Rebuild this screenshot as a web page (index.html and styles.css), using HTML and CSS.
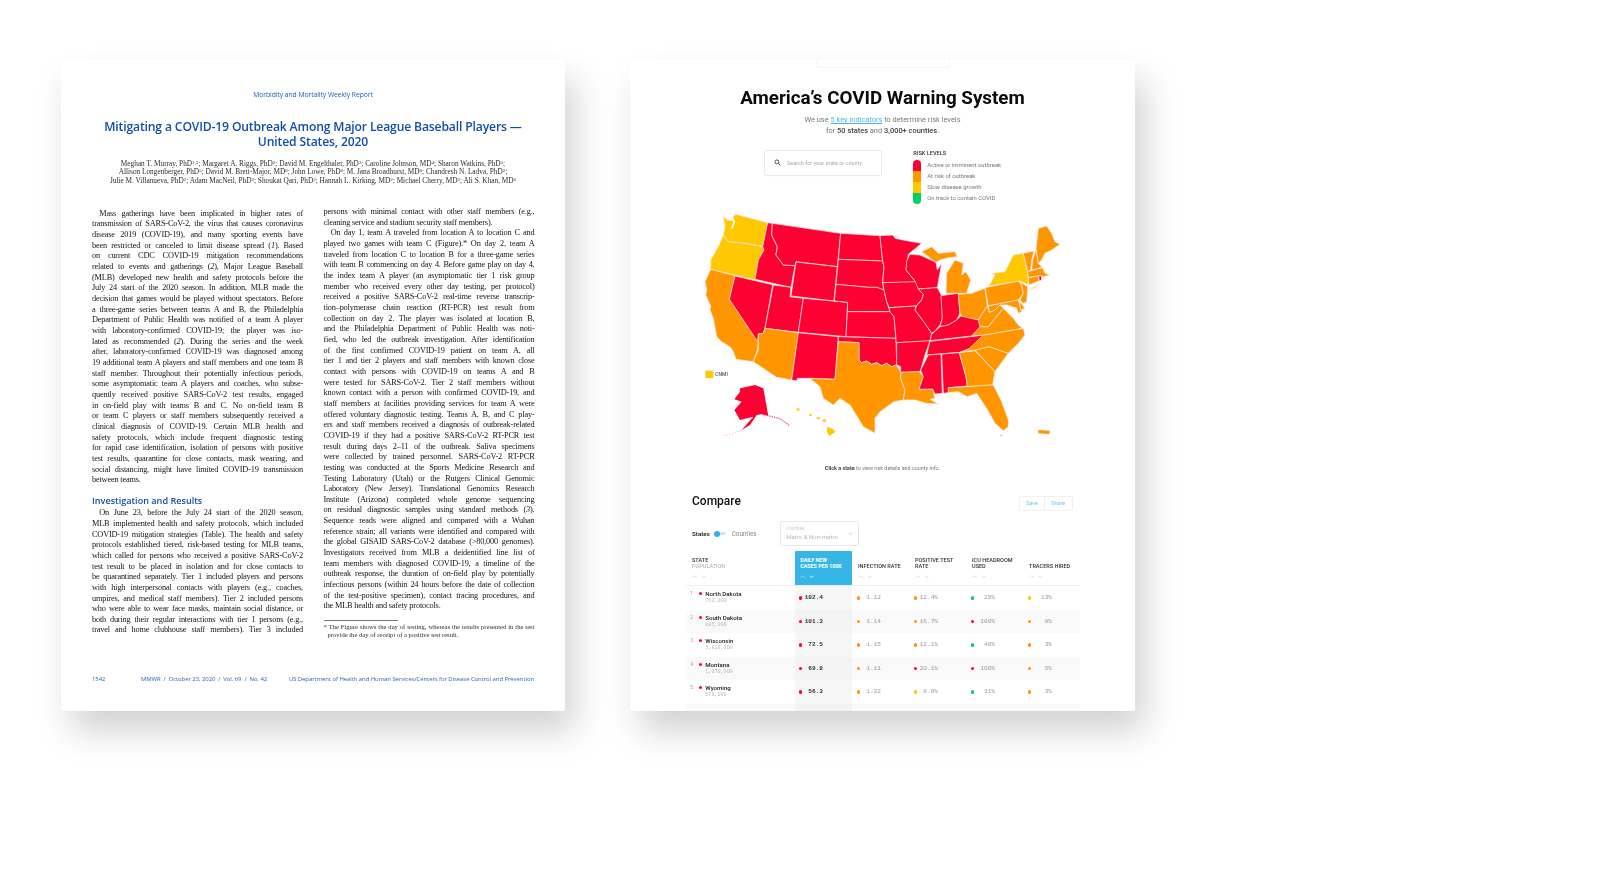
FILE: index.html
```html
<!DOCTYPE html>
<html lang="en">
<head>
<meta charset="utf-8">
<title>MMWR report and COVID Warning System</title>
<link rel="stylesheet" href="styles.css">
</head>
<body>
<main class="stage">
  <article class="card paper">
    <header class="paper-head">
      <div class="journal">Morbidity and Mortality Weekly Report</div>
      <h1 class="paper-title">Mitigating a COVID-19 Outbreak Among Major League Baseball Players —<br>United States, 2020</h1>
      <p class="authors">Meghan T. Murray, PhD<sup>1,5</sup>; Margaret A. Riggs, PhD<sup>2</sup>; David M. Engelthaler, PhD<sup>3</sup>; Caroline Johnson, MD<sup>4</sup>; Sharon Watkins, PhD<sup>5</sup>;<br>Allison Longenberger, PhD<sup>5</sup>; David M. Brett-Major, MD<sup>6</sup>; John Lowe, PhD<sup>6</sup>; M. Jana Broadhurst, MD<sup>6</sup>; Chandresh N. Ladva, PhD<sup>2</sup>;<br>Julie M. Villanueva, PhD<sup>2</sup>; Adam MacNeil, PhD<sup>2</sup>; Shoukat Qari, PhD<sup>2</sup>; Hannah L. Kirking, MD<sup>2</sup>; Michael Cherry, MD<sup>2</sup>; Ali S. Khan, MD<sup>6</sup></p>
    </header>
    <div class="columns">
      <div class="col col-left">
        <p class="just indent">Mass gatherings have been implicated in higher rates of<br>transmission of SARS-CoV-2, the virus that causes coronavirus<br>disease 2019 (COVID-19), and many sporting events have<br>been restricted or canceled to limit disease spread (<i>1</i>). Based<br>on current CDC COVID-19 mitigation recommendations<br>related to events and gatherings (<i>2</i>), Major League Baseball<br>(MLB) developed new health and safety protocols before the<br>July 24 start of the 2020 season. In addition, MLB made the<br>decision that games would be played without spectators. Before<br>a three-game series between teams A and B, the Philadelphia<br>Department of Public Health was notified of a team A player<br>with laboratory-confirmed COVID-19; the player was iso-<br>lated as recommended (<i>2</i>). During the series and the week<br>after, laboratory-confirmed COVID-19 was diagnosed among<br>19 additional team A players and staff members and one team B<br>staff member. Throughout their potentially infectious periods,<br>some asymptomatic team A players and coaches, who subse-<br>quently received positive SARS-CoV-2 test results, engaged<br>in on-field play with teams B and C. No on-field team B<br>or team C players or staff members subsequently received a<br>clinical diagnosis of COVID-19. Certain MLB health and<br>safety protocols, which include frequent diagnostic testing<br>for rapid case identification, isolation of persons with positive<br>test results, quarantine for close contacts, mask wearing, and<br>social distancing, might have limited COVID-19 transmission</p>
        <p class="tail">between teams.</p>
        <h2 class="section">Investigation and Results</h2>
        <p class="just indent">On June 23, before the July 24 start of the 2020 season,<br>MLB implemented health and safety protocols, which included<br>COVID-19 mitigation strategies (Table). The health and safety<br>protocols established tiered, risk-based testing for MLB teams,<br>which called for persons who received a positive SARS-CoV-2<br>test result to be placed in isolation and for close contacts to<br>be quarantined separately. Tier 1 included players and persons<br>with high interpersonal contacts with players (e.g., coaches,<br>umpires, and medical staff members). Tier 2 included persons<br>who were able to wear face masks, maintain social distance, or<br>both during their regular interactions with tier 1 persons (e.g.,<br>travel and home clubhouse staff members). Tier 3 included</p>
      </div>
      <div class="col">
        <p class="just">persons with minimal contact with other staff members (e.g.,</p>
        <p class="tail">cleaning service and stadium security staff members).</p>
        <p class="just indent">On day 1, team A traveled from location A to location C and<br>played two games with team C (Figure).* On day 2, team A<br>traveled from location C to location B for a three-game series<br>with team B commencing on day 4. Before game play on day 4,<br>the index team A player (an asymptomatic tier 1 risk group<br>member who received every other day testing, per protocol)<br>received a positive SARS-CoV-2 real-time reverse transcrip-<br>tion–polymerase chain reaction (RT-PCR) test result from<br>collection on day 2. The player was isolated at location B,<br>and the Philadelphia Department of Public Health was noti-<br>fied, who led the outbreak investigation. After identification<br>of the first confirmed COVID-19 patient on team A, all<br>tier 1 and tier 2 players and staff members with known close<br>contact with persons with COVID-19 on teams A and B<br>were tested for SARS-CoV-2. Tier 2 staff members without<br>known contact with a person with confirmed COVID-19, and<br>staff members at facilities providing services for team A were<br>offered voluntary diagnostic testing. Teams A, B, and C play-<br>ers and staff members received a diagnosis of outbreak-related<br>COVID-19 if they had a positive SARS-CoV-2 RT-PCR test<br>result during days 2–11 of the outbreak. Saliva specimens<br>were collected by trained personnel. SARS-CoV-2 RT-PCR<br>testing was conducted at the Sports Medicine Research and<br>Testing Laboratory (Utah) or the Rutgers Clinical Genomic<br>Laboratory (New Jersey). Translational Genomics Research<br>Institute (Arizona) completed whole genome sequencing<br>on residual diagnostic samples using standard methods (<i>3</i>).<br>Sequence reads were aligned and compared with a Wuhan<br>reference strain; all variants were identified and compared with<br>the global GISAID SARS-CoV-2 database (&gt;80,000 genomes).<br>Investigators received from MLB a deidentified line list of<br>team members with diagnosed COVID-19, a timeline of the<br>outbreak response, the duration of on-field play by potentially<br>infectious persons (within 24 hours before the date of collection<br>of the test-positive specimen), contact tracing procedures, and</p>
        <p class="tail">the MLB health and safety protocols.</p>
        <div class="foot-rule"></div>
        <p class="footnote"><span class="just-line">* The Figure shows the day of testing, whereas the results presented in the test</span><span class="foot-2">provide the day of receipt of a positive test result.</span></p>
      </div>
    </div>
    <footer class="paper-foot">
      <span class="page-no">1542</span>
      <span>MMWR &nbsp;/&nbsp; October 23, 2020 &nbsp;/&nbsp; Vol. 69 &nbsp;/&nbsp; No. 42</span>
      <span class="dept">US Department of Health and Human Services/Centers for Disease Control and Prevention</span>
    </footer>
  </article>

  <section class="card tool">
    <div class="tab"></div>
    <h1 class="tool-title">America’s COVID Warning System</h1>
    <p class="tool-sub">We use <a class="key-link">5 key indicators</a> to determine risk levels<br>for <b>50 states</b> and <b>3,000+ counties</b>.</p>
    <div class="finder">
      <div class="search">
        <svg class="search-icon" viewBox="0 0 12 12"><circle cx="5" cy="5" r="3.4"/><path d="M7.6 7.6 11 11"/></svg>
        <span>Search for your state or county</span>
      </div>
      <div class="legend">
        <div class="legend-title">RISK LEVELS</div>
        <div class="legend-body">
          <div class="legend-bar"><i class="seg-r"></i><i class="seg-o"></i><i class="seg-y"></i><i class="seg-g"></i></div>
          <ul class="legend-list">
            <li>Active or imminent outbreak</li>
            <li>At risk of outbreak</li>
            <li>Slow disease growth</li>
            <li>On track to contain COVID</li>
          </ul>
        </div>
      </div>
    </div>

    <svg class="map" viewBox="0 30 1200 700" aria-label="Map of US states by risk level">
      <g class="states">
        <path class="y" d="M100,50 L112,60 L128,62 L130,50 L138,43 L233,68 L218,140 L165,130 L115,125 L100,105 L105,80 Z"/>
        <path class="y" d="M100,105 L115,125 L165,130 L218,140 L222,150 L205,180 L195,240 L62,208 L62,180 L85,140 Z"/>
        <path class="o" d="M62,208 L135,227 L118,298 L205,425 L202,450 L190,485 L138,478 L130,455 L122,442 L95,425 L80,410 L70,355 L60,330 L62,318 L47,285 L50,270 L45,245 Z"/>
        <path class="r" d="M135,228 L248,254 L225,385 L220,400 L205,402 L203,425 L118,298 Z"/>
        <path class="r" d="M233,68 L247,70 L245,105 L262,140 L258,165 L280,195 L315,197 L303,262 L195,238 L205,180 L222,150 L218,140 Z"/>
        <path class="r" d="M247,70 L452,100 L442,200 L318,185 L315,197 L280,195 L258,165 L262,140 L245,105 Z"/>
        <path class="r" d="M318,186 L442,200 L432,303 L303,288 Z"/>
        <path class="r" d="M250,255 L303,262 L300,290 L340,295 L325,397 L225,385 Z"/>
        <path class="r" d="M340,295 L473,307 L468,410 L325,397 Z"/>
        <path class="o" d="M225,385 L325,398 L305,540 L260,532 L190,485 L205,450 L205,402 L220,400 Z"/>
        <path class="r" d="M325,398 L445,410 L435,538 L360,535 L322,535 L320,543 L305,540 Z"/>
        <path class="r" d="M452,100 L570,107 L578,183 L445,178 Z"/>
        <path class="r" d="M445,178 L578,183 L582,200 L578,248 L582,270 L560,262 L535,262 L438,253 Z"/>
        <path class="r" d="M438,253 L535,262 L560,262 L582,270 L590,305 L600,335 L472,335 L473,307 L433,303 Z"/>
        <path class="r" d="M472,335 L600,335 L612,350 L618,415 L468,410 Z"/>
        <path class="r" d="M445,410 L618,415 L620,495 L605,500 L590,490 L575,497 L560,488 L545,493 L530,483 L515,488 L507,480 L507,428 L445,425 Z"/>
        <path class="o" d="M445,425 L507,428 L507,480 L515,488 L530,483 L545,493 L560,488 L575,497 L590,490 L605,500 L620,495 L632,517 L632,535 L645,570 L640,600 L612,605 L570,635 L555,655 L555,700 L520,680 L480,615 L450,595 L430,615 L400,595 L390,560 L360,535 L435,538 Z"/>
        <path class="r" d="M570,107 L608,105 L615,115 L650,122 L695,130 L655,163 L648,210 L675,243 L680,247 L578,248 L582,200 L578,183 Z"/>
        <path class="r" d="M578,248 L678,245 L685,265 L700,283 L695,300 L678,318 L598,323 L590,305 L582,270 Z"/>
        <path class="r" d="M598,323 L678,318 L675,330 L705,370 L725,400 L720,422 L707,442 L705,425 L618,428 L618,415 L612,350 L600,335 Z"/>
        <path class="r" d="M620,428 L720,422 L705,465 L692,510 L688,515 L632,517 L632,500 L620,495 Z"/>
        <path class="o" d="M632,517 L688,515 L700,530 L687,568 L728,567 L735,595 L720,598 L745,612 L710,610 L675,600 L640,600 L645,570 L632,535 Z"/>
        <path class="r" d="M648,210 L650,183 L660,163 L690,165 L738,187 L742,210 L755,190 L742,263 L685,267 L675,243 Z"/>
        <path class="r" d="M685,267 L742,263 L755,287 L757,355 L750,375 L735,393 L725,400 L705,370 L675,330 L680,317 L695,300 L700,283 Z"/>
        <path class="r" d="M753,287 L805,280 L810,340 L800,360 L775,375 L750,380 L757,355 Z"/>
        <path class="o" d="M695,155 L725,140 L745,160 L795,155 L802,170 L775,173 L750,180 L738,187 Z"/>
        <path class="o" d="M768,280 L770,220 L795,180 L820,190 L815,225 L828,215 L842,240 L830,280 Z"/>
        <path class="o" d="M805,283 L845,280 L885,265 L892,318 L865,360 L820,355 L810,340 Z"/>
        <path class="r" d="M725,403 L750,380 L775,375 L800,360 L812,348 L865,360 L872,385 L845,408 L720,422 Z"/>
        <path class="r" d="M710,465 L720,424 L885,405 L840,445 L810,457 Z"/>
        <path class="r" d="M715,465 L753,462 L757,580 L735,582 L728,567 L687,568 L700,530 L692,510 Z"/>
        <path class="r" d="M755,462 L808,458 L828,530 L832,558 L775,563 L775,578 L760,580 Z"/>
        <path class="o" d="M808,458 L855,452 L915,515 L908,555 L832,560 L828,530 Z"/>
        <path class="o" d="M855,450 L898,440 L955,460 L915,515 Z"/>
        <path class="o" d="M835,448 L880,405 L1000,385 L1005,405 L985,430 L955,460 L898,440 L855,450 L810,457 Z"/>
        <path class="o" d="M845,408 L870,380 L895,380 L915,355 L940,325 L955,340 L970,355 L985,375 L997,385 L882,405 Z"/>
        <path class="o" d="M865,360 L892,318 L898,337 L915,330 L930,315 L940,325 L915,355 L895,380 L870,380 Z"/>
        <path class="o" d="M885,263 L985,243 L995,255 L1000,280 L985,300 L895,318 Z"/>
        <path class="y" d="M900,253 L915,225 L905,220 L945,215 L960,185 L970,165 L1000,160 L1013,215 L1015,255 L990,243 L895,258 Z"/>
        <path class="o" d="M895,318 L985,300 L995,335 L985,340 L980,325 L950,315 L930,315 L915,330 L898,337 Z"/>
        <path class="o" d="M988,302 L1005,325 L992,330 Z"/>
        <path class="o" d="M990,245 L1013,260 L1010,305 L1000,310 L990,300 L1000,280 L995,255 Z"/>
        <path class="o" d="M1000,160 L1032,153 L1025,180 L1022,210 L1013,215 Z"/>
        <path class="o" d="M1038,150 L1045,190 L1057,202 L1025,210 L1028,180 Z"/>
        <path class="o" d="M1045,85 L1070,78 L1085,100 L1095,125 L1110,133 L1085,150 L1065,160 L1055,180 L1045,190 L1038,145 Z"/>
        <path class="o" d="M1013,215 L1057,203 L1065,220 L1080,225 L1060,230 L1050,227 L1015,233 Z"/>
        <path class="o" d="M1015,233 L1045,228 L1047,243 L1017,255 Z"/>
        <path class="r" d="M1046,228 L1054,227 L1055,240 L1048,243 Z"/>
        <path class="y" d="M1015,270 L1048,253 L1035,263 Z"/>
        <path class="o" d="M775,563 L832,560 L900,555 L910,555 L935,605 L955,660 L955,680 L940,692 L915,670 L890,625 L860,580 L832,590 L805,575 L775,578 Z"/>
      </g>
      <path class="sound" d="M128,56 L133,66 L125,86"/>
      <path class="bay" d="M976,322 L984,345 L980,368"/>
      <g class="isles">
        <path class="o" d="M1045,690 L1080,692 L1078,702 L1045,700 Z"/>
        <path class="o" d="M928,708 L936,704 L936,708 Z"/>
        <path class="y" d="M412,680 L430,688 L436,696 L418,708 L410,694 Z"/>
        <path class="y" d="M320,625 L328,625 L328,632 L320,632 Z"/>
        <path class="y" d="M358,642 L365,642 L365,648 L358,648 Z"/>
        <path class="y" d="M380,652 L390,652 L390,657 L380,657 Z"/>
        <path class="y" d="M398,658 L408,658 L408,665 L398,665 Z"/>
        <path class="r" d="M150,565 L195,555 L220,565 L235,648 L215,643 L200,645 L180,675 L155,690 L190,650 L150,660 L133,630 L155,605 L133,598 L150,575 Z"/>
        <path class="pan" d="M238,648 L268,655 L298,676"/>
        <path class="chain" d="M155,692 L125,702 L100,706"/>
      </g>
      <rect class="y" x="46" y="512" width="24" height="22"/>
      <text class="map-label" x="76" y="528">CNMI</text>
    </svg>

    <p class="map-note"><b>Click a state</b> to view risk details and county info.</p>

    <div class="compare-head">
      <h2 class="compare-title">Compare</h2>
      <div class="actions"><a>Save</a><a>Share</a></div>
    </div>

    <div class="controls">
      <span class="ctl-on">States</span>
      <span class="toggle"><i></i></span>
      <span class="ctl-off">Counties</span>
      <div class="select">
        <span class="select-label">Counties</span>
        <span class="select-value">Metro &amp; Non-metro</span>
        <svg class="select-chev" viewBox="0 0 8 5"><path d="M1 1l3 3 3-3"/></svg>
      </div>
    </div>

    <div class="table">
      <div class="thead">
        <div class="th first"><div class="th-label">State<span class="th-sub">Population</span></div><div class="sort"><svg viewBox="0 0 8 5"><path d="M1 4l3-3 3 3"/></svg><svg viewBox="0 0 8 5"><path d="M1 1l3 3 3-3"/></svg></div></div>
        <div class="th active"><div class="th-label">Daily new<br>cases per 100k</div><div class="sort"><svg viewBox="0 0 8 5"><path d="M1 4l3-3 3 3"/></svg><svg class="on" viewBox="0 0 8 5"><path d="M1 1l3 3 3-3"/></svg></div></div>
        <div class="th"><div class="th-label">Infection rate</div><div class="sort"><svg viewBox="0 0 8 5"><path d="M1 4l3-3 3 3"/></svg><svg viewBox="0 0 8 5"><path d="M1 1l3 3 3-3"/></svg></div></div>
        <div class="th"><div class="th-label">Positive test<br>rate</div><div class="sort"><svg viewBox="0 0 8 5"><path d="M1 4l3-3 3 3"/></svg><svg viewBox="0 0 8 5"><path d="M1 1l3 3 3-3"/></svg></div></div>
        <div class="th"><div class="th-label">ICU headroom<br>used</div><div class="sort"><svg viewBox="0 0 8 5"><path d="M1 4l3-3 3 3"/></svg><svg viewBox="0 0 8 5"><path d="M1 1l3 3 3-3"/></svg></div></div>
        <div class="th"><div class="th-label">Tracers hired</div><div class="sort"><svg viewBox="0 0 8 5"><path d="M1 4l3-3 3 3"/></svg><svg viewBox="0 0 8 5"><path d="M1 1l3 3 3-3"/></svg></div></div>
      </div>

      <div class="tr">
        <div class="td place"><span class="rank">1</span><i class="dot r"></i><div><div class="name">North Dakota</div><div class="pop">762,000</div></div></div>
        <div class="td lead"><i class="dot r"></i><span>102.4</span></div>
        <div class="td"><i class="dot o"></i><span>1.12</span></div>
        <div class="td"><i class="dot o"></i><span>12.4%</span></div>
        <div class="td"><i class="dot g"></i><span>29%</span></div>
        <div class="td"><i class="dot y"></i><span>13%</span></div>
      </div>
      <div class="tr">
        <div class="td place"><span class="rank">2</span><i class="dot r"></i><div><div class="name">South Dakota</div><div class="pop">885,000</div></div></div>
        <div class="td lead"><i class="dot r"></i><span>101.3</span></div>
        <div class="td"><i class="dot o"></i><span>1.14</span></div>
        <div class="td"><i class="dot o"></i><span>16.7%</span></div>
        <div class="td"><i class="dot r"></i><span>100%</span></div>
        <div class="td"><i class="dot o"></i><span>8%</span></div>
      </div>
      <div class="tr">
        <div class="td place"><span class="rank">3</span><i class="dot r"></i><div><div class="name">Wisconsin</div><div class="pop">5,820,000</div></div></div>
        <div class="td lead"><i class="dot r"></i><span>72.5</span></div>
        <div class="td"><i class="dot o"></i><span>1.15</span></div>
        <div class="td"><i class="dot o"></i><span>12.1%</span></div>
        <div class="td"><i class="dot g"></i><span>40%</span></div>
        <div class="td"><i class="dot o"></i><span>3%</span></div>
      </div>
      <div class="tr">
        <div class="td place"><span class="rank">4</span><i class="dot r"></i><div><div class="name">Montana</div><div class="pop">1,070,000</div></div></div>
        <div class="td lead"><i class="dot r"></i><span>69.8</span></div>
        <div class="td"><i class="dot o"></i><span>1.11</span></div>
        <div class="td"><i class="dot r"></i><span>20.1%</span></div>
        <div class="td"><i class="dot r"></i><span>100%</span></div>
        <div class="td"><i class="dot o"></i><span>5%</span></div>
      </div>
      <div class="tr">
        <div class="td place"><span class="rank">5</span><i class="dot r"></i><div><div class="name">Wyoming</div><div class="pop">579,000</div></div></div>
        <div class="td lead"><i class="dot r"></i><span>56.3</span></div>
        <div class="td"><i class="dot o"></i><span>1.22</span></div>
        <div class="td"><i class="dot y"></i><span>8.0%</span></div>
        <div class="td"><i class="dot g"></i><span>31%</span></div>
        <div class="td"><i class="dot o"></i><span>3%</span></div>
      </div>
      <div class="tr tr-cut">
        <div class="td place"></div>
        <div class="td lead"></div>
      </div>
    </div>
  </section>
</main>
</body>
</html>
```

FILE: styles.css
```css
* { box-sizing: border-box; }
html, body { margin: 0; padding: 0; background: #fff; }
p, h1, h2, ul { margin: 0; padding: 0; }
ul { list-style: none; }

.stage {
  width: 1600px;
  height: 888px;
  overflow: hidden;
  display: flex;
  align-items: flex-start;
  gap: 65px;
  padding: 60px 0 0 61px;
}
.card {
  height: 651px;
  background: #fff;
  border-radius: 2px;
  box-shadow: 10px 20px 35px rgba(0, 0, 0, .18);
  overflow: hidden;
  filter: blur(.42px);
  flex: none;
}

/* ---------- paper ---------- */
.paper {
  width: 504px;
  padding: 30px 31px 26px;
  display: flex;
  flex-direction: column;
  font-family: "Liberation Serif", serif;
  color: #141414;
}
.journal {
  font: 6.8px/10px "Open Sans", sans-serif;
  color: #1c5db0;
  text-align: center;
  letter-spacing: -.01em;
}
.paper-title {
  margin-top: 20px;
  font: 600 12.15px/14.7px "Open Sans", sans-serif;
  color: #0f4fa5;
  text-align: center;
  letter-spacing: -.012em;
}
.authors {
  margin-top: 10.8px;
  font-size: 7.3px;
  line-height: 8.2px;
  text-align: center;
  color: #2c2c2c;
}
.authors sup { font-size: 5px; line-height: 0; vertical-align: 2.4px; }
.columns {
  margin-top: 22.3px;
  display: grid;
  grid-template-columns: 211px 211px;
  column-gap: 20.5px;
}
.col {
  font-size: 8.3px;
  line-height: 10.65px;
  letter-spacing: -.18px;
  white-space: nowrap;
}
.col-left { padding-top: 1.7px; }
.just { text-align: justify; text-align-last: justify; }
.indent { text-indent: 7.3px; }
.section {
  margin: 9.4px 0 1px;
  font: 600 9.1px/12px "Open Sans", sans-serif;
  letter-spacing: 0;
  color: #0f4fa5;
}
.foot-rule { margin-top: 8px; width: 74px; height: 1px; background: #777; }
.footnote { margin-top: 2px; font-size: 6.6px; line-height: 8px; letter-spacing: 0; color: #2c2c2c; }
.just-line { display: block; text-align: justify; text-align-last: justify; }
.foot-2 { display: block; padding-left: 4px; }
.paper-foot {
  margin-top: auto;
  display: flex;
  font: 5.97px/12px "Open Sans", sans-serif;
  color: #2a66b4;
  letter-spacing: -.012em;
}
.page-no { width: 49px; }
.dept { margin-left: auto; }

/* ---------- tool ---------- */
.tool {
  width: 505px;
  font-family: Roboto, sans-serif;
  color: #111;
}
.tab {
  width: 134px;
  height: 8px;
  margin: 0 auto;
  border: 1px solid #f5f5f5;
  border-top: 0;
  border-radius: 0 0 3px 3px;
}
.tool-title {
  margin-top: 18.4px;
  font-size: 18.8px;
  font-weight: 700;
  line-height: 24px;
  text-align: center;
  color: #0a0a0a;
}
.tool-sub {
  margin-top: 4.1px;
  font-size: 7.44px;
  line-height: 11px;
  text-align: center;
  color: #777;
}
.tool-sub b { font-weight: 500; color: #444; }
.key-link { color: #4db8e8; text-decoration: underline; }
.finder {
  margin-top: 13.5px;
  padding-left: 134px;
  display: flex;
  align-items: flex-start;
  gap: 31.3px;
}
.search {
  width: 118px;
  height: 25.7px;
  display: flex;
  align-items: center;
  padding-left: 9px;
  gap: 6px;
  border: 1px solid #e9e9e9;
  border-radius: 2px;
  box-shadow: 0 0 1px rgba(0, 0, 0, .08);
  font-size: 5.5px;
  color: #aaa;
}
.search-icon { width: 7px; height: 7px; fill: none; stroke: #333; stroke-width: 1.4; flex: none; }
.legend { color: #777; }
.legend-title { margin-bottom: 2.6px; font-size: 5.6px; line-height: 7.4px; font-weight: 500; color: #333; }
.legend-body { display: flex; gap: 6.3px; }
.legend-bar {
  width: 7.7px;
  height: 44.3px;
  border-radius: 4px;
  overflow: hidden;
  display: flex;
  flex-direction: column;
}
.legend-bar i { flex: 1; display: block; }
.seg-r { background: #ff0033; }
.seg-o { background: #ff9500; }
.seg-y { background: #ffc800; }
.seg-g { background: #00d068; }
.legend-list { padding-top: .5px; }
.legend-list li { font-size: 5.9px; line-height: 11px; }

.map { display: block; width: 400px; height: 233.33px; margin: 5.7px 0 0 60px; }
.map .r { fill: #ff0033; }
.map .o { fill: #ff9600; }
.map .y { fill: #ffc800; }
.states path { stroke: #ffe6df; stroke-width: 2.2; stroke-linejoin: round; }
.map .sound { fill: none; stroke: #fff; stroke-width: 5; }
.map .bay { fill: none; stroke: #fff; stroke-width: 4; }
.map .pan { fill: none; stroke: #ff5577; stroke-width: 4; stroke-dasharray: 4 3; }
.map .chain { fill: none; stroke: #ff8899; stroke-width: 2; stroke-dasharray: 3 6; }
.map-label { font: 500 15px Roboto, sans-serif; fill: #555; }
.map-note {
  margin-top: 20.7px;
  font-size: 5.4px;
  line-height: 8px;
  text-align: center;
  color: #777;
}
.map-note b { font-weight: 700; color: #444; }

.compare-head {
  margin-top: 21px;
  padding: 0 62.3px 0 62px;
  display: flex;
  justify-content: space-between;
  align-items: flex-start;
}
.compare-title { font-size: 12px; line-height: 16px; font-weight: 500; color: #111; }
.actions {
  margin-top: 3px;
  height: 15px;
  display: flex;
  border: 1px solid #f0f0f0;
  border-radius: 2px;
  font-size: 5.5px;
  line-height: 13px;
  color: #6cc6f0;
}
.actions a { padding: 0 6px; }
.actions a + a { border-left: 1px solid #f0f0f0; padding: 0 6.5px; }

.controls {
  margin-top: 10px;
  padding-left: 62px;
  height: 24.7px;
  display: flex;
  align-items: center;
}
.ctl-on { font-size: 6.2px; font-weight: 700; color: #333; width: 22px; }
.toggle {
  position: relative;
  width: 12px;
  height: 3.6px;
  border-radius: 2px;
  background: #c5e9f8;
}
.toggle i {
  position: absolute;
  left: 0;
  top: -1.2px;
  width: 6px;
  height: 6px;
  border-radius: 50%;
  background: #2fb2e4;
}
.ctl-off { margin-left: 5.7px; font-size: 6.3px; color: #888; width: 48.5px; }
.select {
  position: relative;
  width: 78.7px;
  height: 24.7px;
  border: 1px solid #e8e8e8;
  border-radius: 2px;
  padding: 2.5px 0 0 5px;
  color: #bbb;
}
.select-label { display: block; font-size: 4.6px; line-height: 7px; color: #ccc; }
.select-value { display: block; margin-top: 1px; font-size: 6.1px; line-height: 8px; }
.select-chev {
  position: absolute;
  right: 5px;
  top: 9.5px;
  width: 5px;
  height: 3.2px;
  fill: none;
  stroke: #bbb;
  stroke-width: 1;
}

.table { margin: 5.3px 0 0 56px; width: 394px; }
.thead, .tr { display: grid; grid-template-columns: 109px repeat(5, 57px); }
.thead { height: 35px; border-bottom: 1px solid #eee; }
.th {
  padding: 5px 0 0 6px;
  font-size: 5.55px;
  font-weight: 500;
  color: #333;
  text-transform: uppercase;
}
.th-label { height: 13.5px; display: flex; flex-direction: column; justify-content: flex-end; line-height: 6.4px; }
.th-sub { color: #aaa; font-weight: 400; }
.th.active {
  background: #35b6e6;
  color: #fff;
  font-weight: 700;
  padding-left: 5.3px;
  font-size: 5.3px;
  border-radius: 1px 1px 0 0;
}
.sort { margin-top: 5.1px; display: flex; gap: 3.4px; }
.sort svg { width: 5.4px; height: 3.4px; fill: none; stroke: #c6c6c6; stroke-width: 1; }
.active .sort svg { stroke: #bfe6f7; }
.active .sort svg.on { stroke: #fff; stroke-width: 1.2; }

.tr { height: 23.5px; }
.tr:nth-child(odd) { background: #f9f9f9; }
.td {
  padding-left: 4.6px;
  display: flex;
  align-items: center;
  font: 6.1px "Liberation Mono", monospace;
  color: #999;
}
.td span { width: 24.4px; margin-left: -3.2px; text-align: right; }
.lead { padding-left: 3.6px; color: #333; font-weight: 700; background: #f6f6f6; }
.tr:nth-child(odd) .lead { background: #f3f3f3; }
.dot { width: 3.2px; height: 3.2px; border-radius: 50%; flex: none; }
.dot.r { background: #ff0033; }
.dot.o { background: #ff9500; }
.dot.y { background: #ffc800; }
.dot.g { background: #00d068; }
.place { padding: 3px 0 0 0; align-items: flex-start; font-family: Roboto, sans-serif; }
.place .rank { width: 12.6px; margin: 0; padding-left: 4px; text-align: left; font-size: 5.6px; line-height: 9px; color: #aaa; }
.place .dot { margin: 3px 3.5px 0 0; }
.name { font: 500 6.1px/9px Roboto, sans-serif; color: #222; }
.pop { font: 5.1px/6.5px "Liberation Mono", monospace; color: #bbb; }
```
